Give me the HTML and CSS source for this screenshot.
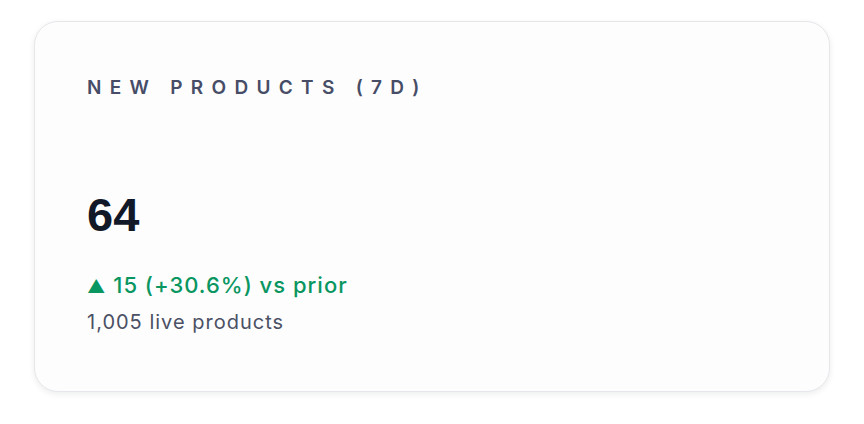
FILE: index.html
```html
<!DOCTYPE html>
<html lang="en">
<head>
<meta charset="utf-8">
<title>New products</title>
<link rel="stylesheet" href="styles.css">
</head>
<body>
<main class="page">
  <section class="card">
    <h2 class="label">New products (7D)</h2>
    <div class="value">64</div>
    <div class="delta"><span class="arrow">▲</span> 15 (+30.6%) vs prior</div>
    <div class="sub">1,005 live products</div>
  </section>
</main>
</body>
</html>
```
FILE: styles.css
```css
* { box-sizing: border-box; }
html, body { margin: 0; padding: 0; background: #ffffff; }
body { font-family: Inter, "Noto Sans", sans-serif; }
.page {
  padding: 21px 34px 32px 34px;
}
.card {
  background: #fdfdfe;
  border: 1px solid #e6e7eb;
  border-radius: 24px;
  box-shadow: 0 2px 6px rgba(17, 24, 39, 0.08);
  padding: 52px 52px 48px 52px;
  height: 371px;
}
.label {
  margin: 0;
  font-size: 19px;
  line-height: 28px;
  font-weight: 600;
  letter-spacing: 8.3px;
  text-transform: uppercase;
  color: #474d66;
}
.value {
  margin-top: 85px;
  font-family: "Liberation Sans", Arial, sans-serif;
  font-size: 47px;
  line-height: 56px;
  font-weight: 700;
  color: #111827;
}
.delta {
  margin-top: 26px;
  font-size: 22px;
  line-height: 32px;
  font-weight: 500;
  letter-spacing: 1px;
  color: #0a9660;
}
.arrow { font-size: 18px; }
.sub {
  margin-top: 5px;
  font-size: 20px;
  line-height: 28px;
  letter-spacing: 1px;
  color: #4b5064;
}
```
